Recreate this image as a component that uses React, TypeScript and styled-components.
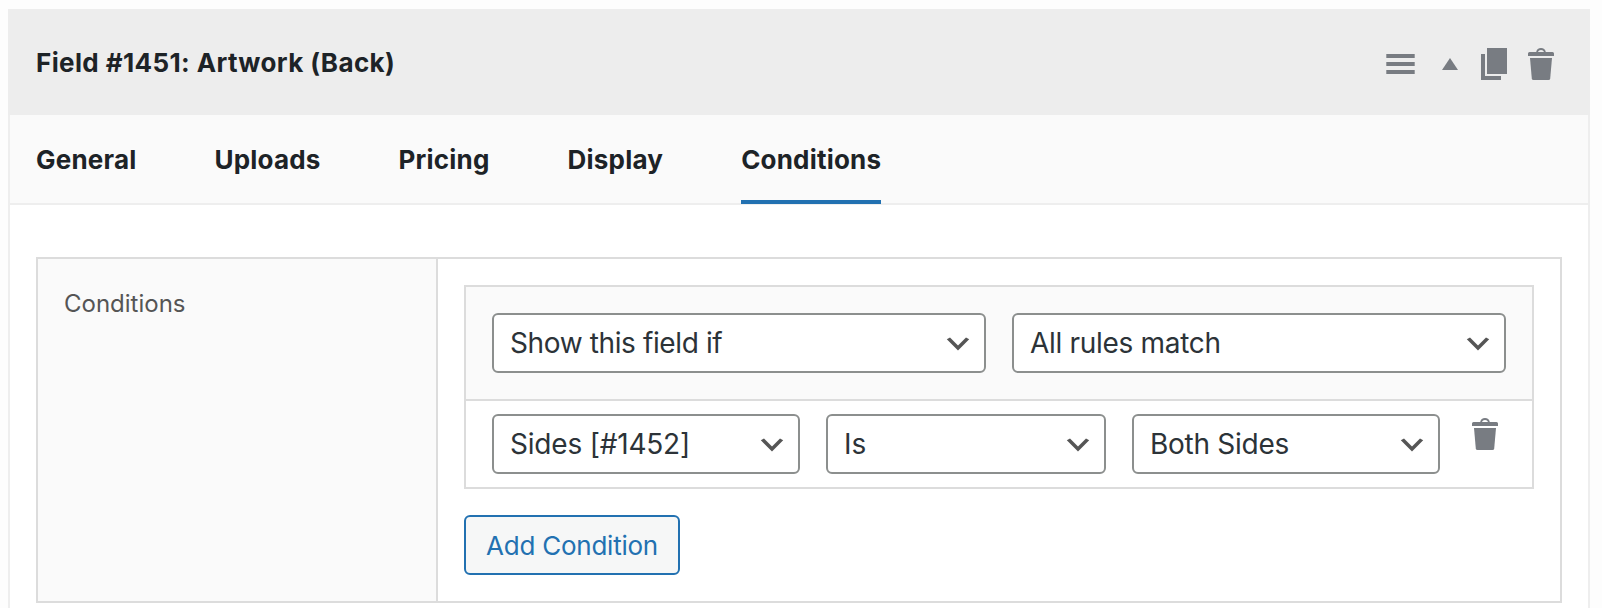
import React from 'react';
import styled, { createGlobalStyle } from 'styled-components';

const GlobalStyle = createGlobalStyle`
  *, *::before, *::after { box-sizing: border-box; }
  body {
    margin: 0;
    background: #fdfdfd;
    color: #1d2327;
    font-family: Inter, "Liberation Sans", sans-serif;
  }
  button { font-family: inherit; color: inherit; }
`;

const Page = styled.div`
  height: 608px;
  padding: 9px 12px 0 8px;
  overflow: hidden;
`;

const Panel = styled.section`
  height: 640px;
  background: #fff;
  border: 2px solid #eee;
  border-top: 0;
`;

const PanelHeader = styled.header`
  display: flex;
  align-items: center;
  justify-content: space-between;
  height: 106px;
  margin: 0 -2px;
  padding: 4px 36px 0 28px;
  background: #ededed;
`;

const Title = styled.h3`
  margin: 0;
  padding-bottom: 2px;
  font-size: 26px;
  font-weight: 700;
  line-height: 36px;
  letter-spacing: 0.38px;
`;

const Actions = styled.div`
  display: flex;
  align-items: center;
  color: #787c82;
`;

const IconButton = styled.button<{ $gap?: number }>`
  display: flex;
  margin: 0 0 0 ${(p) => p.$gap ?? 0}px;
  padding: 0;
  border: 0;
  background: none;
  color: #787c82;

  svg { display: block; }
`;

const Tabs = styled.nav`
  display: flex;
  gap: 78px;
  height: 90px;
  padding: 0 26px;
  background: #fafafa;
  border-bottom: 2px solid #eee;
`;

const Tab = styled.button<{ $active?: boolean }>`
  height: 89px;
  padding: 4px 0 0;
  border: 0;
  border-bottom: 4px solid ${(p) => (p.$active ? '#2271b1' : 'transparent')};
  background: none;
  font-size: 26px;
  font-weight: 700;
  letter-spacing: 0.2px;
`;

const Settings = styled.div`
  display: grid;
  grid-template-columns: 400px 1fr;
  margin: 52px 26px 0;
  border: 2px solid #dcdcdc;
`;

const LabelCell = styled.div`
  padding: 27px 26px 26px;
  background: #fafafa;
  border-right: 2px solid #dcdcdc;
  color: #555;
  font-size: 24px;
  line-height: 36px;
`;

const FieldCell = styled.div`
  padding: 26px;
`;

const Rules = styled.div`
  margin-bottom: 26px;
  border: 2px solid #dcdcdc;
`;

const RulesHead = styled.div`
  display: flex;
  gap: 26px;
  padding: 26px;
  background: #fafafa;
  border-bottom: 2px solid #dcdcdc;
`;

const Rule = styled.div`
  display: grid;
  grid-template-columns: 308px 280px 308px auto;
  justify-content: start;
  column-gap: 26px;
  padding: 13px 26px;
`;

const SelectBox = styled.button<{ $tracking: number }>`
  display: flex;
  flex: 1;
  align-items: center;
  justify-content: space-between;
  height: 60px;
  padding: 0 10px 0 16px;
  border: 2px solid #8c8f8e;
  border-radius: 6px;
  background: #fff;
  color: #2c3338;
  font-size: 28px;
  letter-spacing: ${(p) => p.$tracking}px;

  svg { margin-top: 2px; }
`;

const RemoveSlot = styled.div`
  padding: 4px 0 0 6px;
`;

const AddButton = styled.button`
  display: flex;
  align-items: center;
  justify-content: center;
  width: 216px;
  height: 60px;
  padding: 0;
  border: 2px solid #2271b1;
  border-radius: 6px;
  background: #f6f7f7;
  color: #2271b1;
  font-size: 26px;
  letter-spacing: -0.24px;
`;

const MenuIcon = () => (
  <svg width="29" height="20" viewBox="0 0 29 20" fill="currentColor">
    <path d="M.3 0h28.400v4H.3zM.3 8h28.400v4H.3zM.3 16h28.400v4H.3z" />
  </svg>
);

const CollapseIcon = () => (
  <svg width="16" height="12" viewBox="0 0 16 12" fill="currentColor">
    <path d="M8 0l8 12H0z" />
  </svg>
);

const DuplicateIcon = () => (
  <svg width="26" height="32" viewBox="0 0 26 32" fill="currentColor">
    <path d="M6 0h20v26H6zM0 6h4v22h16v4H0z" />
  </svg>
);

const TrashIcon = () => (
  <svg width="26" height="32" viewBox="0 0 26 32" fill="currentColor">
    <path d="M8.2 4C8.6 1.600 10.500 0 13 0s4.400 1.600 4.800 4H24.500Q26 4 26 5.500V8H0V5.500Q0 4 1.500 4zM10 4h6c-.4-1.300-1.500-2.100-3-2.100S10.400 2.700 10 4z" fillRule="evenodd" />
    <path d="M2 10h22l-1.800 20.400Q22 32 20.500 32h-15Q4 32 3.800 30.400z" />
  </svg>
);

const Chevron = () => (
  <svg width="32" height="32" viewBox="0 0 20 20" fill="#555">
    <path d="M5 6l5 5 5-5 2 1-7 7-7-7 2-1z" />
  </svg>
);

const Select = ({ value, tracking = 0 }: { value: string; tracking?: number }) => (
  <SelectBox type="button" $tracking={tracking}>
    <span>{value}</span>
    <Chevron />
  </SelectBox>
);

const TABS = ['General', 'Uploads', 'Pricing', 'Display', 'Conditions'];

export default function App() {
  return (
    <>
      <GlobalStyle />
      <Page>
        <Panel>
          <PanelHeader>
            <Title>Field #1451: Artwork (Back)</Title>
            <Actions>
              <IconButton aria-label="Reorder"><MenuIcon /></IconButton>
              <IconButton aria-label="Collapse" $gap={27}><CollapseIcon /></IconButton>
              <IconButton aria-label="Duplicate" $gap={23}><DuplicateIcon /></IconButton>
              <IconButton aria-label="Delete" $gap={21}><TrashIcon /></IconButton>
            </Actions>
          </PanelHeader>
          <Tabs>
            {TABS.map((name) => (
              <Tab key={name} type="button" $active={name === 'Conditions'}>{name}</Tab>
            ))}
          </Tabs>
          <Settings>
            <LabelCell>Conditions</LabelCell>
            <FieldCell>
              <Rules>
                <RulesHead>
                  <Select value="Show this field if" tracking={-0.38} />
                  <Select value="All rules match" tracking={-0.31} />
                </RulesHead>
                <Rule>
                  <Select value="Sides [#1452]" tracking={-0.2} />
                  <Select value="Is" />
                  <Select value="Both Sides" tracking={-0.27} />
                  <RemoveSlot>
                    <IconButton aria-label="Remove condition"><TrashIcon /></IconButton>
                  </RemoveSlot>
                </Rule>
              </Rules>
              <AddButton type="button">Add Condition</AddButton>
            </FieldCell>
          </Settings>
        </Panel>
      </Page>
    </>
  );
}
